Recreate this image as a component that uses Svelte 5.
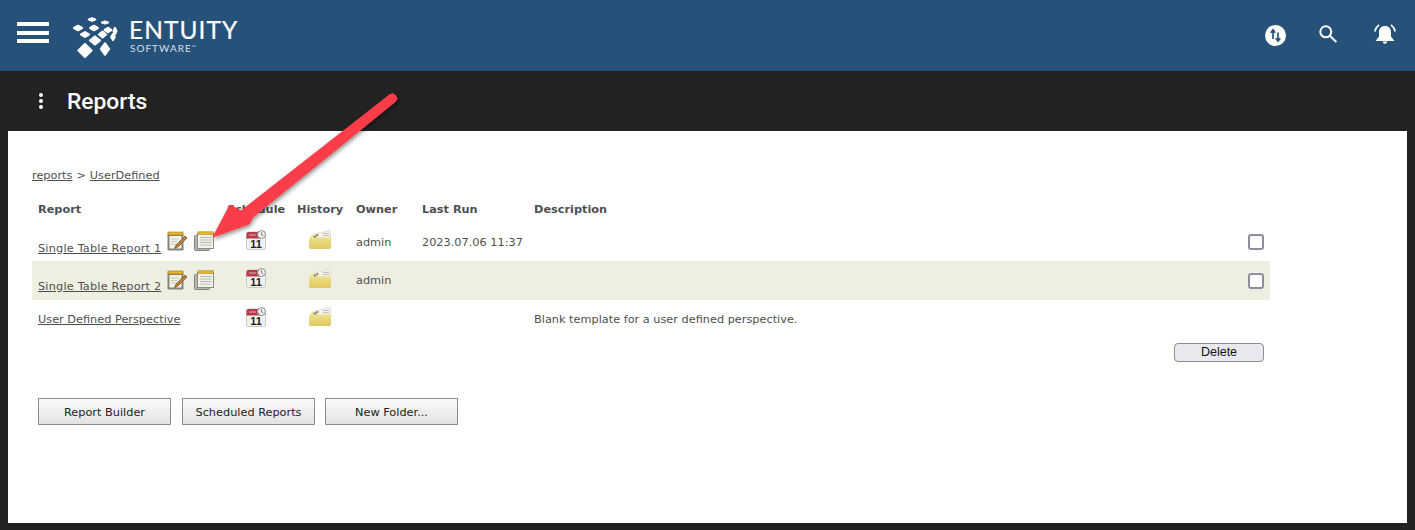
<script>
  const rows = [
    { name: 'Single Table Report 1', tools: true, owner: 'admin', run: '2023.07.06 11:37', desc: '', check: true, cls: 'r1' },
    { name: 'Single Table Report 2', tools: true, owner: 'admin', run: '', desc: '', check: true, cls: 'r2' },
    { name: 'User Defined Perspective', tools: false, owner: '', run: '', desc: 'Blank template for a user defined perspective.', check: false, cls: 'r3' }
  ];
  // logo tiles: centre x, centre y, half-width, half-height (logo pixels)
  const tiles = [
    [22, 5.500, 3.200, 1.200], [35, 8.500, 3, 1],
    [8, 14, 4, 2.200], [24, 14, 3.800, 2.200], [38, 16, 3.200, 2.200], [45, 17, 1.400, 3],
    [15, 20.500, 4, 2.400], [32.500, 20.500, 3.600, 2.800], [43, 23, 1.800, 3],
    [25, 26.500, 5, 4], [15, 36.500, 6.500, 6.500], [35, 35, 4, 5.500]
  ];
  const pts = (t) => `${t[0] - t[2]},${t[1]} ${t[0]},${t[1] - t[3]} ${t[0] + t[2]},${t[1]} ${t[0]},${t[1] + t[3]}`;
</script>

{#snippet editIcon()}
  <svg class="ic" width="20" height="20" viewBox="0 0 20 20">
    <rect x=".5" y="2.500" width="16" height="17" rx="1" fill="#85857d"/>
    <rect x="2.500" y="5" width="12" height="12.500" fill="#f4f2e6"/>
    <rect x="1" y="1" width="15" height="3" fill="#e5b52c" stroke="#9a7a20" stroke-width=".6"/>
    <path d="M4 8h8M4 10.500h6M4 13h5" stroke="#c9c7b8"/>
    <path d="M18 5 9 14l-1.500 3.500L11 16l9-9z" fill="#b9803a" stroke="#6f5126" stroke-width=".7"/>
  </svg>
{/snippet}
{#snippet copyIcon()}
  <svg class="ic" width="20" height="20" viewBox="0 0 20 20">
    <rect x=".5" y="4.500" width="15" height="15" rx="1" fill="#b4b4ad" stroke="#85857f"/>
    <rect x="3.500" y="2.500" width="16" height="15" fill="#f3f2ea" stroke="#8d8d85"/>
    <rect x="4" y=".8" width="15.500" height="2.600" fill="#e5b52c" stroke="#a98a28" stroke-width=".6"/>
    <path d="M6 6.500h11.500M6 9h11.500M6 11.500h11.500M6 14h11.500" stroke="#b9b8ae"/>
  </svg>
{/snippet}
{#snippet calIcon()}
  <svg class="ic" width="21" height="20" viewBox="0 0 21 20">
    <rect x=".5" y="2" width="19" height="17.500" rx="2" fill="#f2f2f0" stroke="#c9c9c6"/>
    <path d="M.5 4a2 2 0 0 1 2-2h14v6.500H.5z" fill="#b33d4b"/>
    <path d="M3 5h7" stroke="#e9aeb4"/>
    <circle cx="15.500" cy="4.500" r="4" fill="#ecebea" stroke="#8f8f8f"/>
    <path d="M15.500 2.300v2.400l1.800 1.200" fill="none" stroke="#666" stroke-width=".8"/>
    <text x="10" y="17.500" text-anchor="middle" class="eleven">11</text>
  </svg>
{/snippet}
{#snippet folderIcon()}
  <svg class="ic" width="22" height="19" viewBox="0 0 22 19">
    <defs>
      <linearGradient id="fold" x1="0" y1="0" x2="0" y2="1">
        <stop offset="0" stop-color="#f4e99f"/>
        <stop offset="1" stop-color="#dfc75c"/>
      </linearGradient>
    </defs>
    <path d="M6 4 20 .5l1.500.7V8H6z" fill="#f3f1ea" stroke="#cfcdc4" stroke-width=".5"/>
    <path d="M14 3.500h6M14 5.500h6" stroke="#b5b5ab" stroke-width=".8"/>
    <path d="M.2 9C1 7 3 5 5 3.500l2.500 3.500c5 .8 9.500 .8 14.500 0v10a2 2 0 0 1-2 2H2a2 2 0 0 1-2-2z" fill="url(#fold)"/>
    <circle cx="6" cy="6.500" r="1.300" fill="#4f9aa8"/>
    <circle cx="8.300" cy="5.200" r="1.100" fill="#c7624f"/>
  </svg>
{/snippet}

<div class="page">
  <header class="top">
    <div class="brand">
      <div class="burger"><i></i><i></i><i></i></div>
      <svg class="mark" width="48" height="44" viewBox="0 0 48 44" fill="#fff" stroke="#fff" stroke-width="2.200" stroke-linejoin="round">
        {#each tiles as t}
          <polygon points={pts(t)}/>
        {/each}
      </svg>
      <div class="word">
        <span class="ent">ENTUITY</span>
        <span class="soft">SOFTWARE<sup>™</sup></span>
      </div>
    </div>
    <div class="tools">
      <svg class="t-swap" width="21" height="21" viewBox="0 0 21 21">
        <circle cx="10.500" cy="10.500" r="10.500" fill="#fff"/>
        <path d="M8 14V5.500M5.800 7.800 8 5l2.200 2.800M13 7.500V16M10.800 13.200 13 16l2.200-2.800" fill="none" stroke="#265179" stroke-width="1.700"/>
      </svg>
      <svg class="t-search" width="18" height="18" viewBox="0 0 18 18" fill="none" stroke="#fff" stroke-width="2">
        <circle cx="6.800" cy="6.800" r="5.500"/>
        <path d="M10.800 10.800 17.300 17"/>
      </svg>
      <svg class="t-bell" width="22" height="20" viewBox="0 0 22 20">
        <path d="M11 2c3.800 0 6 2.600 6 6v4.500L20.500 17h-19L5 12.500V8c0-3.400 2.200-6 6-6zM8.800 17.500h4.400a2.200 2.200 0 0 1-4.400 0z" fill="#fff"/>
        <path d="M5 .8C2.800 2.500 1.300 4.600.8 7.500M17 .8c2.200 1.700 3.700 3.800 4.200 6.700" fill="none" stroke="#fff" stroke-width="1.600"/>
      </svg>
    </div>
  </header>

  <div class="bar">
    <div class="dots"><i></i><i></i><i></i></div>
    <h1>Reports</h1>
  </div>

  <main class="panel">
    <div class="crumb"><a href="#r">reports</a> &gt; <a href="#u">UserDefined</a></div>

    <table>
      <thead>
        <tr>
          <th class="c-report">Report</th>
          <th class="c-sched">Schedule</th>
          <th class="c-hist">History</th>
          <th class="c-owner">Owner</th>
          <th class="c-run">Last Run</th>
          <th>Description</th>
          <th class="c-check"></th>
        </tr>
      </thead>
      <tbody>
        {#each rows as r}
          <tr class={r.cls}>
            <td class="c-report" class:hastools={r.tools}>
              {#if r.tools}
                <div class="namecell">
                  <a class="link wide" href="#n">{r.name}</a>
                  <span class="edit">{@render editIcon()}</span>
                  <span class="copy">{@render copyIcon()}</span>
                </div>
              {:else}
                <a class="link plain" href="#n">{r.name}</a>
              {/if}
            </td>
            <td class="c-sched center">{@render calIcon()}</td>
            <td class="c-hist center">{@render folderIcon()}</td>
            <td>{r.owner}</td>
            <td>{r.run}</td>
            <td>{r.desc}</td>
            <td class="c-check">{#if r.check}<span class="box"></span>{/if}</td>
          </tr>
        {/each}
      </tbody>
    </table>

    <div class="delrow"><button class="del">Delete</button></div>

    <div class="actions">
      <button class="act">Report Builder</button>
      <button class="act">Scheduled Reports</button>
      <button class="act">New Folder...</button>
    </div>
  </main>

  <svg class="arrow" width="1415" height="530" viewBox="0 0 1415 530">
    <defs>
      <filter id="sh" x="-20%" y="-20%" width="140%" height="140%">
        <feDropShadow dx="1" dy="2" stdDeviation="2" flood-color="#000" flood-opacity=".45"/>
      </filter>
    </defs>
    <path d="M390 94.500a4.500 4.500 0 0 1 5.500 7L253 217l-4 7-36 13 17-32 11 6z" fill="#fb3e48" stroke="#fb3e48" stroke-linejoin="round" filter="url(#sh)"/>
  </svg>
</div>

<style>
  :global(body) { margin: 0; background: #222222; }
  .page {
    width: 1415px; height: 530px; position: relative; overflow: hidden;
    background: #222222; display: flex; flex-direction: column;
    font-family: "DejaVu Sans", sans-serif; color: #4f4f4f;
  }
  .top {
    height: 71px; flex: none; background: #265179; display: flex;
    align-items: center; justify-content: space-between;
    padding: 0 19px 0 17px; box-sizing: border-box;
  }
  .brand { display: flex; align-items: center; }
  .burger { width: 32px; display: flex; flex-direction: column; gap: 4.500px; margin: 0 24px 6px 0; }
  .burger i { display: block; height: 4px; background: #fff; }
  .mark { margin: 1px 11px 0 -3px; }
  .word { display: flex; flex-direction: column; color: #fff; }
  .ent { font: 400 24.500px/24px Lato, sans-serif; letter-spacing: 1.050px; -webkit-text-stroke: .2px #fff; }
  .soft { font: 400 10px/12px Lato, sans-serif; letter-spacing: 1px; color: #d7e0e8; padding-left: 1px; }
  .soft sup { font-size: 5px; line-height: 0; vertical-align: 3px; }
  .tools { display: flex; align-items: center; }
  .t-swap { margin-right: 33px; }
  .t-search { margin: 0 37px 4px 0; }
  .t-bell { margin-bottom: 4px; }
  .bar { height: 60px; flex: none; display: flex; align-items: center; }
  .dots { width: 67px; display: flex; flex-direction: column; align-items: flex-start; gap: 2px; padding-left: 39px; box-sizing: border-box; }
  .dots i { width: 4px; height: 4px; border-radius: 50%; background: #fff; }
  h1 { margin: 2px 0 0; font: 500 22.800px/1 Roboto, sans-serif; color: #fff; }
  .panel {
    flex: none; height: 392px; margin: 0 8px; background: #fff; box-sizing: border-box;
    padding: 38px 24px 0; font-size: 11.300px;
  }
  .crumb { line-height: 14px; color: #4f4f4f; word-spacing: .4px; }
  .crumb a, .link { color: #4f4f4f; text-decoration: underline; }
  table { border-collapse: collapse; width: 1238px; margin-top: 13px; table-layout: fixed; }
  th { text-align: left; font-weight: 700; height: 27px; padding: 0 0 0 6px; color: #4f4f4f; vertical-align: middle; white-space: nowrap; }
  td { padding: 0 0 0 6px; height: 38px; vertical-align: middle; white-space: nowrap; }
  tr.r2 td { height: 39px; background: #eeeee1; }
  .c-report { width: 188px; }
  .c-sched { width: 64px; }
  .c-hist { width: 53px; }
  .c-owner { width: 60px; }
  .c-run { width: 106px; }
  th.c-check, td.c-check { width: 22px; padding: 0; }
  td.center { text-align: left; padding: 0; }
  th.c-sched { padding-left: 1px; }
  td.hastools { vertical-align: top; }
  .namecell { display: flex; align-items: flex-start; padding-top: 8px; }
  tr.r2 .namecell { padding-top: 9px; }
  .link { display: block; line-height: 14px; }
  .wide { margin-top: 11px; letter-spacing: .19px; }
  tr.r2 .wide { margin-top: 10px; }
  .plain { position: relative; top: 1px; display: inline-block; }
  .edit { margin-left: 6px; }
  .copy { margin-left: 7px; }
  .ic { display: block; }
  .c-sched .ic { margin: -5px 0 0 20px; }
  .c-hist .ic { margin: -5px 0 0 18px; }
  .eleven { font: 700 11px "Liberation Sans", sans-serif; fill: #222; }
  .box { display: block; box-sizing: border-box; width: 16px; height: 16px; border: 2px solid #8f8d9b; border-radius: 3px; background: #fff; }
  .delrow { width: 1238px; display: flex; justify-content: flex-end; box-sizing: border-box; padding-right: 6px; margin-top: 5px; }
  button { font-family: "DejaVu Sans", sans-serif; cursor: pointer; }
  .del {
    width: 90px; height: 19px; padding: 0 0 2px; font: 12.500px "Liberation Sans", sans-serif; color: #111;
    border: 1px solid #8d8b99; border-radius: 4px; background: #e9e8ef;
  }
  .actions { display: flex; gap: 11px; padding-left: 6px; margin-top: 36px; }
  .act {
    width: 133px; height: 27px; padding: 2px 0 0; font-size: 11.300px; color: #222;
    border: 1px solid #8c8c8c; background: linear-gradient(#fafafa, #e2e2e2); border-radius: 0;
  }
  .act:last-child { margin-left: -1px; }
  .arrow { position: absolute; left: 0; top: 0; pointer-events: none; }
</style>
